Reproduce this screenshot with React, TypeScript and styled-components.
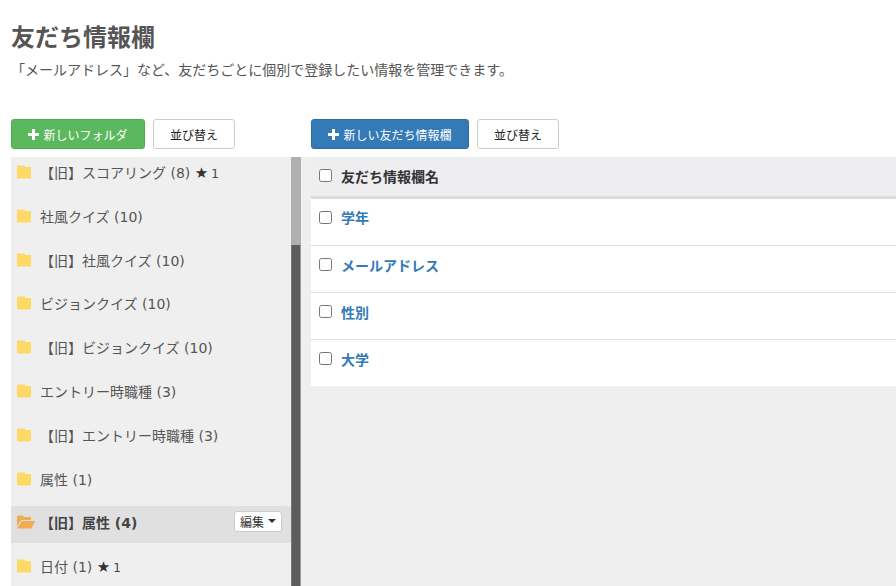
import React from "react";
import styled, { createGlobalStyle } from "styled-components";

const Global = createGlobalStyle`
  html, body { margin: 0; padding: 0; height: 100%; overflow: hidden; background: #fff; }
  body { font-family: "DejaVu Sans", "Noto Sans CJK JP", sans-serif; font-size: 14px; color: #333; }
  #root { height: 100%; }
`;

const Page = styled.div`
  width: 896px;
  height: 586px;
  overflow: hidden;
  padding-left: 11px;
  box-sizing: border-box;
  display: flex;
  flex-direction: column;
`;
const Title = styled.h1`
  margin: 24px 0 0;
  font-size: 24px;
  line-height: 28px;
  font-weight: 700;
  color: #555;
`;
const Subtitle = styled.p`
  margin: 8px 0 0;
  font-size: 14px;
  line-height: 20px;
  color: #555;
`;
const Columns = styled.div`
  margin-top: 39px;
  flex: 1;
  min-height: 0;
  display: flex;
`;
const LeftCol = styled.div`
  width: 290px;
  display: flex;
  flex-direction: column;
  flex: none;
`;
const RightCol = styled.div`
  flex: 1;
  min-width: 0;
  display: flex;
  flex-direction: column;
`;
const Toolbar = styled.div<{ $indent?: number }>`
  display: flex;
  gap: 8px;
  height: 30px;
  margin-bottom: 8px;
  padding-left: ${(p) => p.$indent ?? 0}px;
  flex: none;
`;
const Button = styled.button<{ $variant?: "success" | "primary"; $w: number }>`
  width: ${(p) => p.$w}px;
  height: 30px;
  padding: 0;
  border-radius: 3px;
  font: inherit;
  font-size: 12px;
  display: flex;
  align-items: center;
  justify-content: center;
  gap: 4px;
  border: 1px solid
    ${(p) => (p.$variant === "success" ? "#4cae4c" : p.$variant === "primary" ? "#2e6da4" : "#ccc")};
  background: ${(p) => (p.$variant === "success" ? "#5cb85c" : p.$variant === "primary" ? "#337ab7" : "#fff")};
  color: ${(p) => (p.$variant ? "#fff" : "#222")};
`;
const Sidebar = styled.div`
  flex: 1;
  min-height: 0;
  display: flex;
  overflow: hidden;
  background: #efefef;
`;
const FolderList = styled.div`
  flex: 1;
  min-width: 0;
  margin-top: -1.5px;
`;
const Row = styled.div<{ $active?: boolean }>`
  height: 37px;
  box-sizing: border-box;
  padding: 0 0 4px 6px;
  margin-bottom: 6.8px;
  display: flex;
  align-items: center;
  background: ${(p) => (p.$active ? "#e0e0e0" : "transparent")};
  font-weight: ${(p) => (p.$active ? 700 : 400)};
  color: ${(p) => (p.$active ? "#444" : "#555")};
  white-space: nowrap;
  position: relative;
`;
const FolderIcon = styled.svg`
  width: 18px;
  height: 14px;
  flex: none;
  margin-right: 5px;
`;
const Star = styled.span`
  font-size: 15px;
  line-height: 1;
  color: #333;
`;
const Count = styled.span`
  margin-left: 3px;
  font-size: 12px;
  color: #444;
`;
const EditBtn = styled.button`
  position: absolute;
  right: 9px;
  top: 5px;
  width: 48px;
  height: 21px;
  padding: 0;
  background: #fff;
  border: 1px solid #ccc;
  border-radius: 3px;
  font: inherit;
  font-weight: 400;
  font-size: 12px;
  color: #333;
  display: flex;
  align-items: center;
  justify-content: center;
  gap: 4px;
`;
const Caret = styled.span`
  width: 0;
  height: 0;
  border-left: 4px solid transparent;
  border-right: 4px solid transparent;
  border-top: 4px solid #333;
`;
const Scrollbar = styled.div`
  width: 10px;
  flex: none;
  background: #5c5c5c;
  border-left: 1px solid #777;
  border-right: 1px solid #999;
  box-sizing: border-box;
  position: relative;
`;
const Thumb = styled.div`
  position: absolute;
  left: -1px;
  right: -1px;
  top: 0;
  height: 88px;
  background: #b0b0b0;
`;
const Panel = styled.div`
  flex: 1;
  min-height: 0;
  background: #efefef;
  padding-left: 10px;
`;
const Table = styled.div`
  background: #fff;
`;
const Head = styled.div`
  height: 37px;
  padding: 0 0 2px 8px;
  background: #eeeef0;
  border-bottom: 3px solid #ddd;
  display: flex;
  align-items: center;
  font-weight: 700;
  color: #333;
`;
const TableRow = styled.div<{ $first?: boolean }>`
  height: ${(p) => (p.$first ? 46 : 47)}px;
  box-sizing: border-box;
  padding: ${(p) => (p.$first ? 9 : 10)}px 0 0 8px;
  display: flex;
  align-items: flex-start;
  font-weight: 700;
  color: #337ab7;
  border-top: ${(p) => (p.$first ? "none" : "1px solid #ddd")};
`;
const Box = styled.span<{ $top?: number }>`
  width: 13px;
  height: 13px;
  flex: none;
  margin-right: 9px;
  margin-top: ${(p) => p.$top ?? 0}px;
  box-sizing: border-box;
  border: 1px solid #767676;
  border-radius: 2.5px;
  background: #fff;
`;
const Label = styled.span`
  line-height: 20px;
`;

const Plus = () => (
  <svg width="11" height="11" viewBox="0 0 11 11" aria-hidden="true">
    <path d="M4 0h3v4h4v3H7v4H4V7H0V4h4z" fill="#fff" />
  </svg>
);

const Closed = () => (
  <FolderIcon viewBox="0 0 18 14" aria-hidden="true">
    <path d="M1 .5h6a1 1 0 0 1 1 .8l.2.7H13a1 1 0 0 1 1 1V12.5a1 1 0 0 1-1 1H1a1 1 0 0 1-1-1V1.5a1 1 0 0 1 1-1z" fill="#ffd966" />
  </FolderIcon>
);
const Open = () => (
  <FolderIcon viewBox="0 0 18 14" aria-hidden="true">
    <path d="M1 .5h4.5l1.5 1.5h6a1 1 0 0 1 1 1V5H4.5L0 11V1.5a1 1 0 0 1 1-1z" fill="#f0ad4e" />
    <path d="M5 6h12.5a.5.5 0 0 1 .4.8L14.5 13.5H.6a.4.4 0 0 1-.3-.7z" fill="#f0ad4e" />
  </FolderIcon>
);

const folders: { name: string; star?: boolean; active?: boolean }[] = [
  { name: "【旧】スコアリング (8)", star: true },
  { name: "社風クイズ (10)" },
  { name: "【旧】社風クイズ (10)" },
  { name: "ビジョンクイズ (10)" },
  { name: "【旧】ビジョンクイズ (10)" },
  { name: "エントリー時職種 (3)" },
  { name: "【旧】エントリー時職種 (3)" },
  { name: "属性 (1)" },
  { name: "【旧】属性 (4)", active: true },
  { name: "日付 (1)", star: true },
];

const fields = ["学年", "メールアドレス", "性別", "大学"];

export default function App() {
  return (
    <Page>
      <Global />
      <Title>友だち情報欄</Title>
      <Subtitle>「メールアドレス」など、友だちごとに個別で登録したい情報を管理できます。</Subtitle>
      <Columns>
        <LeftCol>
          <Toolbar>
            <Button $variant="success" $w={134}>
              <Plus />
              新しいフォルダ
            </Button>
            <Button $w={82}>並び替え</Button>
          </Toolbar>
          <Sidebar>
            <FolderList>
              {folders.map((f) => (
                <Row key={f.name} $active={f.active}>
                  {f.active ? <Open /> : <Closed />}
                  <span>
                    {f.name}
                    {f.star && (
                      <>
                        {" "}
                        <Star>★</Star>
                        <Count>1</Count>
                      </>
                    )}
                  </span>
                  {f.active && (
                    <EditBtn>
                      編集
                      <Caret />
                    </EditBtn>
                  )}
                </Row>
              ))}
            </FolderList>
            <Scrollbar>
              <Thumb />
            </Scrollbar>
          </Sidebar>
        </LeftCol>
        <RightCol>
          <Toolbar $indent={10}>
            <Button $variant="primary" $w={158}>
              <Plus />
              新しい友だち情報欄
            </Button>
            <Button $w={82}>並び替え</Button>
          </Toolbar>
          <Panel>
            <Table>
              <Head>
                <Box />
                友だち情報欄名
              </Head>
              {fields.map((f, i) => (
                <TableRow key={f} $first={i === 0}>
                  <Box $top={i === 0 ? 3 : 2} />
                  <Label>{f}</Label>
                </TableRow>
              ))}
            </Table>
          </Panel>
        </RightCol>
      </Columns>
    </Page>
  );
}
